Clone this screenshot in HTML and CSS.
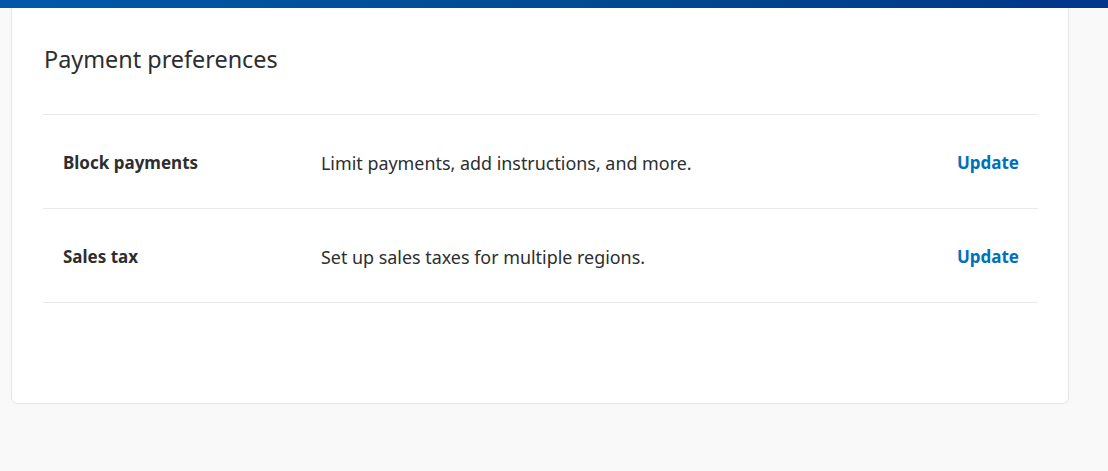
FILE: index.html
```html
<!DOCTYPE html>
<html>
<head>
<meta charset="utf-8">
<link rel="stylesheet" href="styles.css">
</head>
<body>
<div class="topbar"></div>
<main class="page">
  <section class="card">
    <h2 class="title">Payment preferences</h2>
    <ul class="rows">
      <li class="row">
        <span class="label">Block payments</span>
        <span class="desc">Limit payments, add instructions, and more.</span>
        <a class="action" href="#">Update</a>
      </li>
      <li class="row">
        <span class="label">Sales tax</span>
        <span class="desc">Set up sales taxes for multiple regions.</span>
        <a class="action" href="#">Update</a>
      </li>
    </ul>
  </section>
</main>
</body>
</html>
```
FILE: styles.css
```css
* { box-sizing: border-box; }
html, body { margin: 0; padding: 0; }
body {
  background: #f9f9f9;
  font-family: "Noto Sans", "Open Sans", sans-serif;
  color: #2c2e2f;
  height: 471px;
  overflow: hidden;
}
.topbar {
  height: 8px;
  background: linear-gradient(90deg, #0059a8 0%, #00488f 60%, #00368a 100%);
}
.page {
  padding: 0 39px 0 11px;
}
.card {
  background: #fff;
  border: 1px solid #e6e6e6;
  border-top: none;
  border-radius: 0 0 6px 6px;
  padding: 35px 30px 100px 31px;
  height: 396px;
}
.title {
  margin: 0 0 39px 1px;
  font-size: 23.4px;
  font-weight: 400;
  line-height: 32px;
  color: #2c2e2f;
}
.rows {
  list-style: none;
  margin: 0;
  padding: 0;
  border-top: 1px solid #eaeaea;
}
.row {
  display: flex;
  align-items: center;
  height: 94px;
  border-bottom: 1px solid #eaeaea;
  padding: 2px 19px 0 20px;
  font-size: 17px;
}
.label {
  width: 258px;
  font-weight: 700;
  color: #2c2e2f;
}
.desc {
  flex: 1;
  font-size: 17.9px;
  color: #2c2e2f;
}
.action {
  color: #0070ba;
  font-weight: 700;
  text-decoration: none;
}
```
